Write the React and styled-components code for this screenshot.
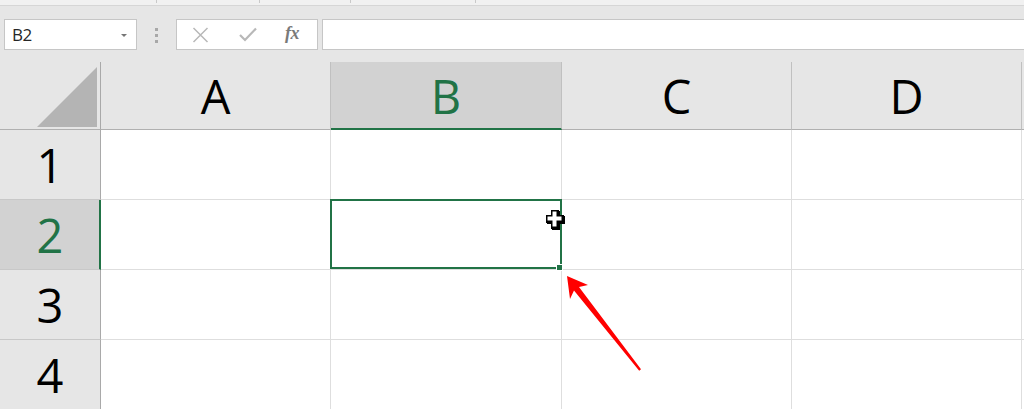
import React from "react";
import styled, { createGlobalStyle } from "styled-components";

const GREEN = "#217346";

const Global = createGlobalStyle`
  html, body { margin: 0; padding: 0; background: #ffffff; overflow: hidden; }
  body { font-family: "Open Sans", "Noto Sans", sans-serif; }
  * { box-sizing: border-box; }
`;

const Page = styled.div`
  position: relative;
  width: 1024px;
  height: 409px;
  overflow: hidden;
  display: flex;
  flex-direction: column;
  background: #e6e6e6;
`;

const Ribbon = styled.div`
  height: 6px;
  flex: none;
  display: flex;
  background: #f1f1f1;
  border-bottom: 1px solid #d6d6d6;
`;

const RibbonGroup = styled.div`
  width: ${(p) => p.$w}px;
  height: 3px;
  border-right: 1px solid #c9c9c9;
`;

const FormulaBar = styled.div`
  height: 56px;
  flex: none;
  display: flex;
  align-items: flex-start;
  padding: 13px 0 0 4px;
  background: #e6e6e6;
`;

const NameBox = styled.div`
  width: 133px;
  height: 31px;
  background: #fff;
  border: 1px solid #c6c6c6;
  display: flex;
  align-items: center;
  justify-content: space-between;
  padding: 0 9px 0 7px;
  font-size: 17px;
  color: #262626;
  letter-spacing: -0.6px;
`;

const Caret = styled.span`
  width: 0;
  height: 0;
  border-left: 3px solid transparent;
  border-right: 3px solid transparent;
  border-top: 3px solid #767676;
  margin-top: 1px;
`;

const Grip = styled.div`
  width: 39px;
  height: 31px;
  display: flex;
  flex-direction: column;
  align-items: center;
  justify-content: center;
  gap: 3px;
  padding-top: 2px;
`;

const GripDot = styled.span`
  width: 3px;
  height: 3px;
  background: #a8a8a8;
`;

const FxBox = styled.div`
  width: 142px;
  height: 31px;
  background: #fff;
  border: 1px solid #c6c6c6;
  display: flex;
  align-items: center;
  padding-left: 15px;
`;

const FxIcon = styled.span`
  width: ${(p) => p.$w}px;
  display: flex;
  align-items: center;
  justify-content: flex-start;
`;

const FxText = styled.span`
  font-family: "Liberation Serif", "DejaVu Serif", serif;
  font-style: italic;
  font-weight: bold;
  font-size: 18px;
  color: #7a7a7a;
  letter-spacing: -0.5px;
  margin-top: -2px;
`;

const FormulaInput = styled.div`
  flex: 1;
  height: 31px;
  margin-left: 4px;
  background: #fff;
  border: 1px solid #c6c6c6;
  border-right: none;
`;

const Sheet = styled.div`
  flex: 1;
  display: grid;
  grid-template-columns: 101px 230px 231px 230px 230px 1fr;
  grid-template-rows: 68px repeat(4, 70px);
  background: #fff;
`;

const Corner = styled.div`
  background: #e6e6e6;
  border-right: 1px solid #a9a9a9;
  border-bottom: 1px solid #b0b0b0;
  display: flex;
  align-items: flex-end;
  justify-content: flex-end;
  padding: 0 3px 2px 0;
`;

const HeaderText = styled.div`
  font-family: "Open Sans", "Noto Sans", sans-serif;
  font-size: 47px;
  line-height: 1;
  padding-top: 2px;
  color: ${(p) => (p.$active ? GREEN : "#000")};
`;

const ColHeader = styled.div`
  background: ${(p) => (p.$active ? "#d2d2d2" : "#e6e6e6")};
  border-right: 1px solid #c0c0c0;
  border-bottom: ${(p) => (p.$active ? `2px solid ${GREEN}` : "1px solid #b0b0b0")};
  display: flex;
  align-items: center;
  justify-content: center;
  padding-bottom: ${(p) => (p.$active ? "0" : "1px")};
`;

const FillerHeader = styled.div`
  background: #e6e6e6;
  border-bottom: 1px solid #b0b0b0;
`;

const RowHeader = styled.div`
  background: ${(p) => (p.$active ? "#d2d2d2" : "#e6e6e6")};
  border-right: ${(p) => (p.$active ? `2px solid ${GREEN}` : "1px solid #a9a9a9")};
  border-bottom: 1px solid #c8c8c8;
  display: flex;
  align-items: center;
  justify-content: center;
  padding-left: ${(p) => (p.$active ? "1px" : "0")};
`;

const Cell = styled.div`
  position: relative;
  background: #fff;
  border-right: 1px solid #dedede;
  border-bottom: 1px solid #dedede;
`;

const FillerCell = styled.div`
  background: #fff;
  border-bottom: 1px solid #dedede;
`;

const Selection = styled.div`
  position: absolute;
  left: -1px;
  top: -1px;
  right: -1px;
  bottom: 0;
  border: 2px solid ${GREEN};
  z-index: 2;
`;

const FillHandle = styled.div`
  position: absolute;
  right: -2px;
  bottom: -2px;
  width: 7px;
  height: 7px;
  background: ${GREEN};
  border: 1px solid #fff;
  z-index: 3;
`;

const Annotation = styled.svg`
  position: absolute;
  left: 0;
  top: 0;
  width: 1024px;
  height: 409px;
  pointer-events: none;
  z-index: 5;
`;

const cols = ["A", "B", "C", "D"];
const rows = [1, 2, 3, 4];
const activeCol = "B";
const activeRow = 2;

const plus = (x0, y0, x1, y1, a0, a1, b0, b1) =>
  `${a0},${y0} ${a1},${y0} ${a1},${b0} ${x1},${b0} ${x1},${b1} ${a1},${b1} ${a1},${y1} ${a0},${y1} ${a0},${b1} ${x0},${b1} ${x0},${b0} ${a0},${b0}`;

export default function App() {
  return (
    <>
      <Global />
      <Page>
        <Ribbon>
          <RibbonGroup $w={157} />
          <RibbonGroup $w={103} />
          <RibbonGroup $w={91} />
          <RibbonGroup $w={125} />
        </Ribbon>
        <FormulaBar>
          <NameBox>
            <span>B2</span>
            <Caret />
          </NameBox>
          <Grip>
            <GripDot />
            <GripDot />
            <GripDot />
          </Grip>
          <FxBox>
            <FxIcon $w={47}>
              <svg width="17" height="16" viewBox="0 0 17 16">
                <path d="M1.5 1 L15.5 15 M15.5 1 L1.5 15" stroke="#b8b8b8" strokeWidth="1.5" fill="none" />
              </svg>
            </FxIcon>
            <FxIcon $w={46}>
              <svg width="18" height="15" viewBox="0 0 18 15">
                <path d="M1 8 L6 13 L17 1.5" stroke="#b8b8b8" strokeWidth="2.2" fill="none" />
              </svg>
            </FxIcon>
            <FxText>fx</FxText>
          </FxBox>
          <FormulaInput />
        </FormulaBar>
        <Sheet>
          <Corner>
            <svg width="60" height="60" viewBox="0 0 60 60">
              <polygon points="60,0 60,60 0,60" fill="#b4b4b4" />
            </svg>
          </Corner>
          {cols.map((c) => (
            <ColHeader key={c} $active={c === activeCol}>
              <HeaderText $active={c === activeCol}>{c}</HeaderText>
            </ColHeader>
          ))}
          <FillerHeader />
          {rows.map((r) => (
            <React.Fragment key={r}>
              <RowHeader $active={r === activeRow}>
                <HeaderText $active={r === activeRow}>{r}</HeaderText>
              </RowHeader>
              {cols.map((c) => (
                <Cell key={c}>
                  {c === activeCol && r === activeRow && (
                    <>
                      <Selection />
                      <FillHandle />
                    </>
                  )}
                </Cell>
              ))}
              <FillerCell />
            </React.Fragment>
          ))}
        </Sheet>
        <Annotation viewBox="0 0 1024 409">
          {/* cross cursor: shadow, outline, white fill */}
          <polygon points={plus(547, 211, 565, 230, 552, 560, 216, 224)} fill="#000" />
          <polygon points={plus(546, 210, 564, 229, 551, 559, 215, 223)} fill="#000" />
          <polygon points={plus(547.5, 211.5, 561.5, 226.5, 552.5, 556.5, 216.5, 220.5)} fill="#fff" />
          {/* red arrow */}
          <polygon
            points="567,276 588,285 579,287 641,369.3 639.2,370.7 574,290.5 570,299"
            fill="#ff0000"
          />
        </Annotation>
      </Page>
    </>
  );
}
